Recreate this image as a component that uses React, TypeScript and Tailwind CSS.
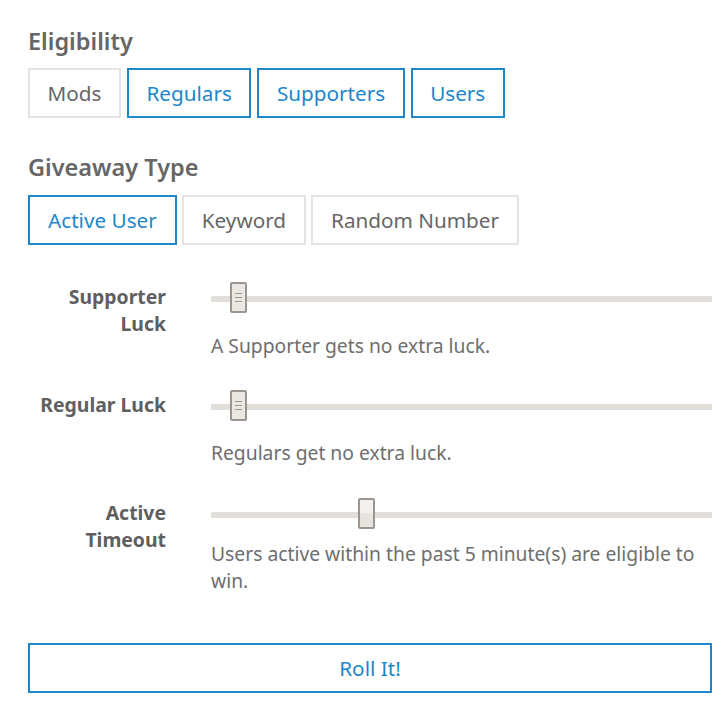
import React from "react";

const BLUE = "border-[#1c87c9] text-[#1c87c9]";
const GRAY = "border-[#e4e4e4] text-[#666666]";

function Btn({ label, active, tight }: { label: string; active: boolean; tight?: boolean }) {
  return (
    <button
      type="button"
      className={`border-2 bg-white ${tight ? "px-[17.5px]" : "px-[18px]"} py-[8px] text-[20.7px] leading-[30px] ${active ? BLUE : GRAY}`}
    >
      {label}
    </button>
  );
}

function Handle({ left, grip }: { left: number; grip: boolean }) {
  return (
    <div
      className={`absolute top-0 h-[31px] w-[17px] rounded-[2px] border-2 border-[#9c958f] flex flex-col items-center justify-center gap-[3px] ${
        grip ? "bg-[#ebe8e4]" : "bg-[linear-gradient(#f2f1ef_0%,#f2f1ef_50%,#e7e4e0_50%,#e7e4e0_100%)]"
      }`}
      style={{ left }}
    >
      {grip && (
        <>
          <div className="h-px w-[7px] bg-[#9c958f]" />
          <div className="h-px w-[7px] bg-[#9c958f]" />
          <div className="h-px w-[7px] bg-[#9c958f]" />
        </>
      )}
    </div>
  );
}

function SliderRow({
  label,
  desc,
  handleLeft,
  grip,
  descMt,
  mb,
}: {
  label: React.ReactNode;
  desc: string;
  handleLeft: number;
  grip: boolean;
  descMt: string;
  mb: string;
}) {
  return (
    <div className={`flex items-start ${mb}`}>
      <div className="w-[138px] shrink-0 pt-[1px] text-right text-[19.4px] font-bold leading-[27px] text-[#5f5f5f]">
        {label}
      </div>
      <div className="ml-[45px] flex-1">
        <div className="relative h-[31px]">
          <div className="absolute left-0 right-0 top-[14px] h-[6px] bg-[#e2dfda]" />
          <Handle left={handleLeft} grip={grip} />
        </div>
        <div className={`${descMt} text-[19.3px] leading-[27px] text-[#6e6e6e]`}>{desc}</div>
      </div>
    </div>
  );
}

export default function App() {
  return (
    <div
      className="w-[723px] min-h-[703px] bg-white pl-[28px] pr-[11px] pt-[26px]"
      style={{ fontFamily: '"Noto Sans", "Open Sans", sans-serif' }}
    >
      <h2 className="text-[23.5px] font-semibold leading-[30px] text-[#666666]">Eligibility</h2>
      <div className="mt-[12px] flex gap-[6px]">
        <Btn label="Mods" active={false} tight />
        <Btn label="Regulars" active tight />
        <Btn label="Supporters" active tight />
        <Btn label="Users" active tight />
      </div>

      <h2 className="mt-[34px] text-[23.5px] font-semibold leading-[30px] text-[#666666]">Giveaway Type</h2>
      <div className="mt-[13px] flex gap-[5px]">
        <Btn label="Active User" active />
        <Btn label="Keyword" active={false} />
        <Btn label="Random Number" active={false} />
      </div>

      <div className="mt-[37px]">
        <SliderRow
          label={
            <>
              Supporter
              <br />
              Luck
            </>
          }
          desc="A Supporter gets no extra luck."
          handleLeft={19}
          grip
          descMt="mt-[19px]"
          mb="mb-[31px]"
        />
        <SliderRow
          label="Regular Luck"
          desc="Regulars get no extra luck."
          handleLeft={19}
          grip
          descMt="mt-[18px]"
          mb="mb-[32px]"
        />
        <SliderRow
          label={
            <>
              Active
              <br />
              Timeout
            </>
          }
          desc="Users active within the past 5 minute(s) are eligible to win."
          handleLeft={147}
          grip={false}
          descMt="mt-[11px]"
          mb="mb-[49px]"
        />
      </div>

      <button
        type="button"
        className="block w-full border-2 border-[#1c87c9] bg-white py-[8px] text-center text-[20.7px] leading-[30px] text-[#1c87c9]"
      >
        Roll It!
      </button>
    </div>
  );
}
